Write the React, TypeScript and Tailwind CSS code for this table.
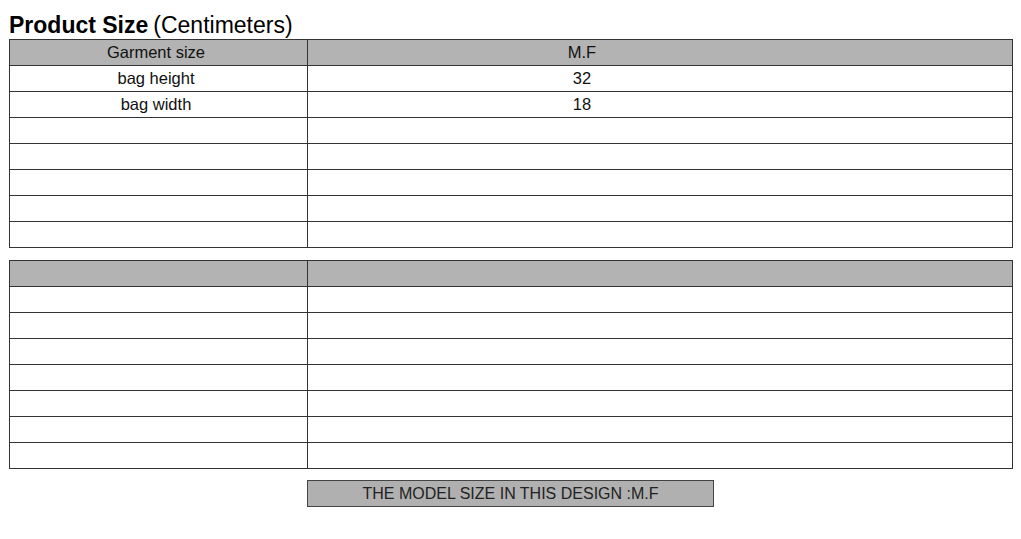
const rows1 = [
  { label: "bag height", value: "32" },
  { label: "bag width", value: "18" },
  { label: "", value: "" },
  { label: "", value: "" },
  { label: "", value: "" },
  { label: "", value: "" },
  { label: "", value: "" },
];

const rows2 = Array.from({ length: 7 }, () => ({ label: "", value: "" }));

function SizeTable({
  head,
  rows,
}: {
  head: { label: string; value: string };
  rows: { label: string; value: string }[];
}) {
  return (
    <div className="grid w-[1004px] grid-cols-[298px_705px] border-l border-t border-[#333]">
      <div className="flex h-[26px] items-center justify-center border-b border-r border-[#333] bg-[#b3b3b3] pr-[5px]">
        {head.label}
      </div>
      <div className="flex h-[26px] items-center border-b border-r border-[#333] bg-[#b3b3b3]">
        <span className="w-[548px] text-center">{head.value}</span>
      </div>
      {rows.map((r, i) => (
        <div key={i} className="contents">
          <div className="flex h-[26px] items-center justify-center border-b border-r border-[#333] pr-[5px]">
            {r.label}
          </div>
          <div className="flex h-[26px] items-center border-b border-r border-[#333]">
            <span className="w-[548px] text-center">{r.value}</span>
          </div>
        </div>
      ))}
    </div>
  );
}

export default function App() {
  return (
    <div
      className="h-[539px] w-[1021px] bg-white pl-[9px] text-[16.5px] text-[#111]"
      style={{ fontFamily: '"Liberation Sans", Arial, sans-serif' }}
    >
      <div className="h-[39px] pt-[14px] text-[23px] leading-[23px] text-black">
        <span className="font-bold">Product Size</span>
        <span className="ml-[5px]">(Centimeters)</span>
      </div>

      <SizeTable head={{ label: "Garment size", value: "M.F" }} rows={rows1} />

      <div className="mt-[12px]">
        <SizeTable head={{ label: "", value: "" }} rows={rows2} />
      </div>

      <div className="ml-[298px] mt-[11px] flex h-[27px] w-[407px] items-center justify-center border border-[#444] bg-[#b0b0b0] text-[16px] text-[#222]">
        THE MODEL SIZE IN THIS DESIGN :M.F
      </div>
    </div>
  );
}
